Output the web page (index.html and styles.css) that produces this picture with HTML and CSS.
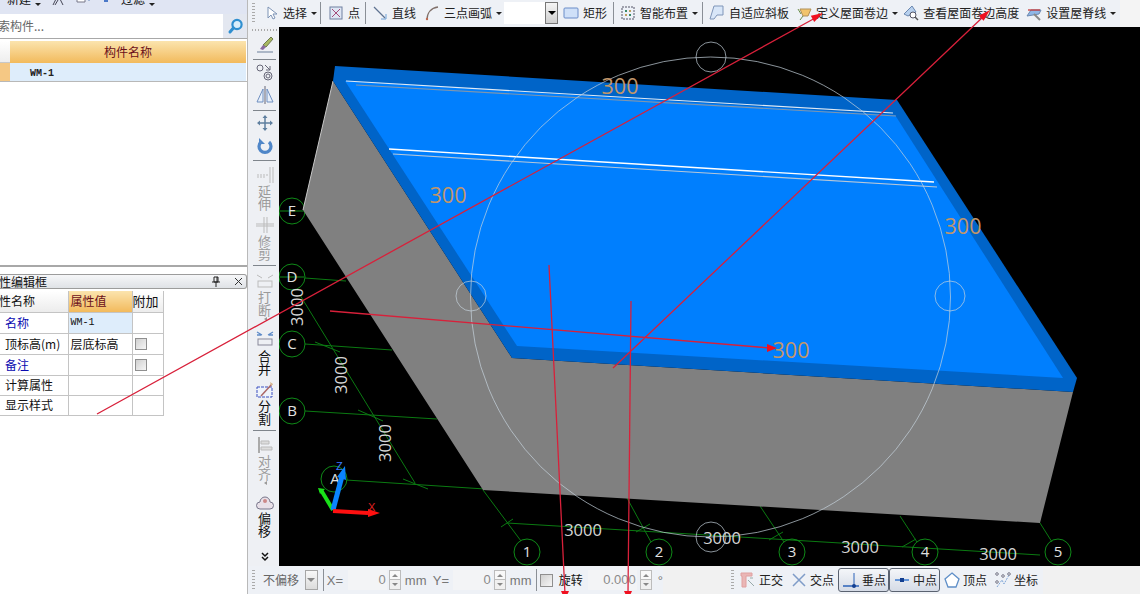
FILE: index.html
```html
<!DOCTYPE html>
<html lang="zh">
<head>
<meta charset="utf-8">
<title>屋面</title>
<link rel="stylesheet" href="styles.css">
</head>
<body>
<div class="app">
  <aside class="left">
    <section class="list-panel">
      <div class="strip">
        <span class="st-a">新建</span><span class="caret"></span>
        <svg class="st-i" width="14" height="14" viewBox="0 0 14 14"><path d="M2 13 7 3l5 10M4 13l3-5" fill="none" stroke="#445"/></svg>
        <svg class="st-i" width="16" height="14" viewBox="0 0 16 14"><path d="M2 1h8v9H2z" fill="#fff" stroke="#778"/><path d="M11 6h3v3" fill="none" stroke="#68b"/></svg>
        <svg class="st-i" width="10" height="14" viewBox="0 0 10 14"><path d="M3 0h4v10H3z" fill="#4a78c8"/></svg>
        <span class="st-b">过滤</span><span class="caret"></span>
      </div>
      <div class="search">
        <div class="search-box">搜索构件...</div>
        <svg class="search-icon" width="18" height="18" viewBox="0 0 18 18"><circle cx="10" cy="7.5" r="4.6" fill="#d9eefb" stroke="#2f8fd0" stroke-width="2.2"/><path d="M6.4 11 3 15" stroke="#2f8fd0" stroke-width="3" stroke-linecap="round"/></svg>
      </div>
      <div class="grid-head"><div class="corner"></div><div class="hcell">构件名称</div></div>
      <div class="grid-row"><div class="rowmark"></div><div class="rowcell">WM-1</div></div>
    </section>
    <section class="prop-panel">
      <div class="titlebar">
        <span class="title">属性编辑框</span>
        <svg class="pin" width="10" height="11" viewBox="0 0 10 11"><path d="M3 1h4v5H3zM1 6h8M5 6v5M6 1v5" fill="none" stroke="#222"/></svg>
        <svg class="close" width="9" height="9" viewBox="0 0 9 9"><path d="M1 1l7 7M8 1 1 8" stroke="#333"/></svg>
      </div>
      <table class="props">
        <tr class="h"><th class="c1"><span class="cut">属性名称</span></th><th class="c2 orange">属性值</th><th class="c3">附加</th></tr>
        <tr class="r1"><td class="lab blue">名称</td><td class="sel">WM-1</td><td></td></tr>
        <tr class="r1"><td class="lab">顶标高(m)</td><td class="val">层底标高</td><td><span class="cb"></span></td></tr>
        <tr class="r1"><td class="lab blue">备注</td><td></td><td><span class="cb"></span></td></tr>
        <tr class="r2"><td class="lab">计算属性</td><td></td><td></td></tr>
        <tr class="r2"><td class="lab">显示样式</td><td></td><td></td></tr>
      </table>
    </section>
  </aside>

  <div class="right">
    <header class="topbar">
      <span class="grip"></span>
      <div class="tool first"><svg width="16" height="16" viewBox="0 0 16 16"><path d="M5 2v11l3-3 2 4 2-1-2-4h4z" fill="#fff" stroke="#7d93b5"/></svg><span>选择</span><i class="caret"></i></div>
      <span class="sep s3"></span>
      <div class="tool ml7"><svg width="16" height="16" viewBox="0 0 16 16"><rect x="2" y="2" width="12" height="12" fill="#dfe6f4" stroke="#6f80a0"/><path d="M4 4l8 8M12 4l-8 8" stroke="#a44c7a"/></svg><span>点</span></div>
      <span class="sep s5"></span>
      <div class="tool"><svg width="16" height="16" viewBox="0 0 16 16"><path d="M2 2l11 11" stroke="#5f7390" stroke-width="1.3"/><path d="M9 14h5V9" fill="none" stroke="#6fa1d6"/></svg><span>直线</span></div>
      <div class="tool ml8"><svg width="16" height="16" viewBox="0 0 16 16"><path d="M3 15C3 8 7 3 14 2" fill="none" stroke="#80706a" stroke-width="1.3"/><circle cx="3" cy="14" r="1.2" fill="#c06a50"/></svg><span>三点画弧</span><i class="caret"></i></div>
      <div class="combo"><div class="combo-field"></div><div class="combo-btn"><i class="caret dark"></i></div></div>
      <div class="tool ml5"><svg width="16" height="16" viewBox="0 0 16 16"><rect x="1" y="3" width="14" height="10" rx="1" fill="#cfe0f8" stroke="#6a8cc8"/></svg><span>矩形</span></div>
      <span class="sep s6"></span>
      <div class="tool"><svg width="16" height="16" viewBox="0 0 16 16"><rect x="2" y="2" width="12" height="12" fill="#eef2f8" stroke="#556" stroke-dasharray="2 1"/><path d="M5 5h2v2H5zM9 9h2v2H9z" fill="#3a8a6a"/><path d="M9 5h2v2H9zM5 9h2v2H5z" fill="#c0a060"/></svg><span>智能布置</span><i class="caret"></i></div>
      <span class="sep s4"></span>
      <div class="tool"><svg width="16" height="16" viewBox="0 0 16 16"><path d="M5 1h9v9H8L5 14H1z" fill="#d8e6f8" stroke="#7f95b8"/></svg><span>自适应斜板</span></div>
      <div class="tool ml7"><svg width="16" height="16" viewBox="0 0 16 16"><path d="M4 4h11l-3 7H7z" fill="#f2c46c" stroke="#b0905a"/><path d="M2 4l3 5M4 15l3-4" stroke="#6b8e4a"/></svg><span>定义屋面卷边</span><i class="caret"></i></div>
      <div class="tool ml5"><svg width="16" height="16" viewBox="0 0 16 16"><path d="M1 9 9 1l4 6-8 4z" fill="#b7d0ee" stroke="#6a88b0"/><circle cx="10" cy="10" r="3" fill="#fff" stroke="#556"/><path d="M12 12l3 3" stroke="#555" stroke-width="1.4"/></svg><span>查看屋面卷边高度</span></div>
      <div class="tool ml7"><svg width="16" height="16" viewBox="0 0 16 16"><path d="M1 11 5 5h10l-2 4z" fill="#8fb6e6" stroke="#6a88b0"/><path d="M2 5h12" stroke="#c83838" stroke-width="1.3"/><path d="M8 9l6 6" stroke="#888" stroke-width="2"/></svg><span>设置屋脊线</span><i class="caret"></i></div>
    </header>

    <div class="middle">
      <nav class="vtool">
        <span class="hgrip"></span>
        <div class="vbtn lead"><svg width="20" height="18" viewBox="0 0 20 18"><path d="M16 1l2 2-7 8-3-2z" fill="#a8b860" stroke="#6f7a50"/><path d="M8 9l3 2-3 3-3-1z" fill="#8a6aa0"/><path d="M2 16h16" stroke="#6a7f9a"/></svg></div>
        <span class="vsep"></span>
        <div class="vbtn"><svg width="20" height="18" viewBox="0 0 20 18"><circle cx="5" cy="5" r="3" fill="none" stroke="#667"/><circle cx="13" cy="13" r="4" fill="none" stroke="#667"/><circle cx="13" cy="13" r="2" fill="none" stroke="#667"/><path d="M10 2l5 5M15 3v4h-4" fill="none" stroke="#667"/></svg></div>
        <div class="vbtn"><svg width="20" height="20" viewBox="0 0 20 20"><path d="M10 1v18" stroke="#667"/><path d="M8 4v13H2z" fill="#e8f0fa" stroke="#6f8fc0"/><path d="M12 4v13h6z" fill="#e8f0fa" stroke="#6f8fc0"/></svg></div>
        <span class="vsep m4"></span>
        <div class="vbtn"><svg width="18" height="18" viewBox="0 0 18 18"><path d="M9 2v14M2 9h14" stroke="#5f7f9f" stroke-width="1.5"/><path d="M9 1l2.5 3h-5zM9 17l2.5-3h-5zM1 9l3-2.5v5zM17 9l-3-2.5v5z" fill="#5f7f9f"/></svg></div>
        <div class="vbtn"><svg width="18" height="18" viewBox="0 0 18 18"><path d="M5 5a6 6 0 1 0 8 0" fill="none" stroke="#4f86c8" stroke-width="3.2"/><path d="M3 1v6h6z" fill="#4f86c8"/></svg></div>
        <span class="vsep m3"></span>
        <div class="vitem p5 off"><svg width="20" height="18" viewBox="0 0 20 18"><path d="M15 1v16M18 1v16" stroke="#bbb"/><path d="M2 9h11M2 11h9" stroke="#bbb" stroke-dasharray="2 1"/></svg><span class="vlabel">延伸</span></div>
        <div class="vitem p6 off"><svg width="20" height="18" viewBox="0 0 20 18"><path d="M9 1v16M12 1v16" stroke="#bbb"/><path d="M1 8h18M1 10h18" stroke="#bbb"/></svg><span class="vlabel">修剪</span></div>
        <span class="vsep m5"></span>
        <div class="vitem p6 off"><svg width="20" height="18" viewBox="0 0 20 18"><path d="M2 3l5 3M18 3l-5 3" stroke="#bbb"/><rect x="3" y="9" width="14" height="6" fill="none" stroke="#bbb"/></svg><span class="vlabel">打断</span></div>
        <i class="tri"></i>
        <div class="vitem p7"><svg class="tall" width="20" height="20" viewBox="0 0 20 20"><path d="M2 3l5 3M18 3l-5 3M2 6h4M18 6h-4" stroke="#5d8ac8" stroke-width="1.3"/><rect x="3" y="10" width="14" height="6" fill="none" stroke="#889"/></svg><span class="vlabel">合并</span></div>
        <div class="vitem p6"><svg width="20" height="18" viewBox="0 0 20 18"><rect x="2" y="6" width="15" height="10" fill="#eef3fb" stroke="#3a4ec0" stroke-dasharray="3 1"/><path d="M6 15 17 3" stroke="#a66" stroke-width="1.5"/><path d="M15 1l3 2-2 2z" fill="#d6b58c"/></svg><span class="vlabel">分割</span></div>
        <span class="vsep m5"></span>
        <div class="vitem p5 off"><svg width="20" height="18" viewBox="0 0 20 18"><path d="M4 1v16" stroke="#aaa" stroke-width="2"/><path d="M6 5h8v3H6zM6 11h11v3H6z" fill="#ddd" stroke="#bbb"/></svg><span class="vlabel">对齐</span></div>
        <i class="tri"></i>
        <div class="vitem p7"><svg width="20" height="18" viewBox="0 0 20 18"><path d="M5 9a5 5 0 0 1 10 0 3.500 3.500 0 0 1 0 7H5a3.500 3.500 0 0 1 0-7z" fill="#e8e0e8" stroke="#77758a"/><circle cx="10" cy="8" r="2" fill="#c88"/></svg><span class="vlabel">偏移</span></div>
        <div class="chev"><svg width="8" height="10" viewBox="0 0 8 10"><path d="M1 1l3 3 3-3M1 5l3 3 3-3" fill="none" stroke="#111" stroke-width="1.5"/></svg></div>
      </nav>

      <main class="canvas">
        <svg class="scene" width="861" height="539" viewBox="279 27 861 539">
          <g class="grid-lines">
            <path d="M305 278 346 281M305 344 392 350M305 411 437 419M346 480 485 489"/>
            <path d="M507 523 1040 555"/>
            <path d="M300 295 415 483"/>
            <path d="M483 490 521 541M627 498 651 542M760 506 784 542M900 516 917 542M1040 523 1052 542"/>
            <path d="M315 342 340 352M358 410 383 421M403 479 428 489M501 527 513 519M636 532 650 524M769 540 783 532M902 547 916 539"/>
          </g>
          <g class="bubbles">
            <circle cx="292" cy="211" r="13"/><circle cx="292" cy="277" r="13"/><circle cx="292" cy="344" r="13"/><circle cx="292" cy="411" r="13"/>
            <circle cx="334" cy="479" r="13"/><circle cx="527" cy="552" r="13"/><circle cx="659" cy="552" r="13"/><circle cx="792" cy="552" r="13"/><circle cx="925" cy="552" r="13"/><circle cx="1058" cy="552" r="13"/>
            <path d="M280 211h24M280 277h24"/>
          </g>
          <polygon class="wall" points="333,81 303,210 483,490 1040,523 1073,392 512,358"/>
          <path class="wall-edge" d="M333 81 303 210"/>
          <polygon class="roof-band" points="335,66 897,100 1077,378 1073,392 512,358 333,81"/>
          <polygon class="roof-top" points="345,81 895,115 1063,378 517,346"/>
          <path class="ridge thin" d="M346 81 893 113"/>
          <path class="ridge" d="M389 149 934 182"/>
          <path class="ridge-soft dim1" d="M356 85 896 116"/>
          <path class="ridge-soft" d="M393 154 937 187"/>
          <circle class="guide" cx="710.500" cy="297" r="240"/>
          <circle class="guide" cx="711" cy="57" r="15"/><circle class="guide" cx="711" cy="537" r="15"/><circle class="guide" cx="471" cy="296" r="15"/><circle class="guide" cx="950" cy="296" r="15"/>
          <g class="t300">
            <text x="620" y="94">300</text><text x="448" y="203">300</text><text x="963" y="234">300</text><text x="791" y="358">300</text>
          </g>
          <g class="t3000">
            <text x="583" y="536">3000</text><text x="722" y="544">3000</text><text x="860" y="553">3000</text><text x="998" y="560">3000</text>
            <text transform="translate(303 307) rotate(-90)">3000</text>
            <text transform="translate(347 375) rotate(-90)">3000</text>
            <text transform="translate(391 443) rotate(-90)">3000</text>
          </g>
          <g class="bubble-text">
            <text x="292" y="216">E</text><text x="292" y="282">D</text><text x="292" y="349">C</text><text x="292" y="416">B</text><text x="335" y="484">A</text>
            <text x="527" y="557">1</text><text x="659" y="557">2</text><text x="792" y="557">3</text><text x="925" y="557">4</text><text x="1058" y="557">5</text>
          </g>
          <path class="ax-g" d="M333 510 321 490"/><polygon class="ax-gf" points="318,488 325,489 320,494"/>
          <path class="ax-b" d="M333 510 342 476"/><polygon class="ax-bf" points="345,466 346,480 337,477"/>
          <path class="ax-r" d="M333 511 368 513"/><polygon class="ax-rf" points="380,513 368,509 368,517"/>
          <text class="ax-z" x="336" y="470">Z</text>
          <text class="ax-x" x="368" y="511">X</text>
        </svg>
      </main>
    </div>

    <footer class="bottombar">
      <div class="bgroup g1">
        <span class="grip"></span>
        <span class="dim off-left">不偏移</span>
        <span class="dd"><i class="caret gray"></i></span>
        <span class="sep s5"></span>
        <span class="lat x1">X=</span>
        <span class="num n1">0</span><span class="spin"></span>
        <span class="lat u">mm</span>
        <span class="lat y1">Y=</span>
        <span class="num n1">0</span><span class="spin"></span>
        <span class="lat u">mm</span>
        <span class="sep s4"></span>
        <span class="cb big"></span>
        <span class="rot">旋转</span>
        <span class="num n2">0.000</span><span class="spin wide"></span>
        <span class="lat deg">°</span>
      </div>
      <div class="bgroup g2">
        <span class="grip"></span>
        <div class="snap"><svg width="18" height="18" viewBox="0 0 18 18"><path d="M2 2h11v3H7v11H3V5H2z" fill="#eab6b6" stroke="#e0a0a0"/><path d="M9 9l6 6M11 7h3" stroke="#9aa"/></svg><span>正交</span></div>
        <div class="snap"><svg width="18" height="18" viewBox="0 0 18 18"><path d="M3 3l12 12M15 3 3 15" stroke="#7f9cc8" stroke-width="1.5"/></svg><span>交点</span></div>
        <div class="snap on"><svg width="18" height="18" viewBox="0 0 18 18"><path d="M1 15h16" stroke="#2b62b8" stroke-width="1.5"/><path d="M12 2v13" stroke="#2b62b8"/><circle cx="12" cy="15" r="2" fill="#123e90"/></svg><span>垂点</span></div>
        <div class="snap on"><svg width="18" height="18" viewBox="0 0 18 18"><path d="M2 9h14" stroke="#3b7ad0" stroke-width="1.5"/><rect x="7" y="7" width="4" height="4" fill="#123e90"/></svg><span>中点</span></div>
        <div class="snap after-on"><svg width="18" height="18" viewBox="0 0 18 18"><path d="M9 2l7 6-3 8H5L2 8z" fill="#fff" stroke="#5f8fc8" stroke-width="1.3"/></svg><span>顶点</span></div>
        <div class="snap"><svg width="18" height="18" viewBox="0 0 18 18"><path d="M3 16 8 9l2 4 5-9" fill="none" stroke="#7fa6d8" stroke-dasharray="2 1"/><circle cx="3" cy="3" r="1.300" fill="none" stroke="#778"/><circle cx="15" cy="3" r="1.300" fill="none" stroke="#778"/><circle cx="9" cy="5" r="1.300" fill="none" stroke="#778"/><circle cx="3" cy="11" r="1.300" fill="none" stroke="#778"/></svg><span>坐标</span></div>
      </div>
    </footer>
  </div>
</div>

<svg class="annot" width="1140" height="594" viewBox="0 0 1140 594">
  <path d="M97 414 817 17M613 368 984 16M330 311 770 348M549 265 565 594M631 301 628 594"/>
  <polygon points="823,13 814.200,21.900 810.800,15.700"/>
  <polygon points="990,10 983.600,20.800 978.800,15.800"/>
  <polygon points="777,348 767,344 767,352"/>
  <polygon points="561,591 569,591 565,600"/>
  <polygon points="624,591 632,591 628,600"/>
</svg>
</body>
</html>
```

FILE: styles.css
```css
* { box-sizing: border-box; }
html, body { margin: 0; padding: 0; height: 100%; }
body {
  position: relative;
  width: 1140px;
  height: 594px;
  overflow: hidden;
  background: #fff;
  font: 12px/14px "Noto Sans CJK SC", "Liberation Sans", sans-serif;
  color: #111;
}
.app { display: flex; width: 1140px; height: 594px; }

/* left column */
.left {
  width: 248px;
  flex: none;
  display: flex;
  flex-direction: column;
  background: #fff;
  border-right: 1px solid #b9b9b9;
}
.list-panel {
  height: 267px;
  flex: none;
  border-bottom: 2px solid #a8a8a8;
  overflow: hidden;
}
.strip {
  height: 14px;
  display: flex;
  align-items: flex-end;
  gap: 4px;
  padding: 0 0 8px 7px;
  background: #e0e5f3;
  overflow: hidden;
  white-space: nowrap;
}
.st-i { flex: none; margin-left: 6px; }
.st-b { margin-left: 6px; }
.caret {
  display: inline-block;
  width: 0;
  height: 0;
  border: 3px solid transparent;
  border-top: 3px solid #222;
  border-bottom: 0;
  flex: none;
}
.caret.dark { border-top-color: #000; border-width: 4px 4px 0; }
.caret.gray { border-top-color: #888; border-width: 4px 4px 0; }
.search {
  height: 25px;
  display: flex;
  align-items: center;
  background: #e3e7f0;
  border-bottom: 1px solid #a8a8a8;
}
.search-box {
  width: 223px;
  height: 24px;
  background: #fff;
  color: #666;
  font-size: 12px;
  line-height: 23px;
  text-indent: -14px;
  overflow: hidden;
  white-space: nowrap;
}
.search-icon { margin-left: 4px; }
.grid-head { display: flex; height: 22px; margin-top: 2px; }
.corner { width: 10px; background: linear-gradient(#fff, #eee); border-bottom: 1px solid #c8c8c8; }
.hcell {
  width: 236px;
  text-align: center;
  color: #6b0f1a;
  font-size: 12px;
  line-height: 21px;
  background: linear-gradient(#fbe4ae, #f2ba5c);
}
.grid-row { display: flex; height: 19px; border-bottom: 1px solid #b8b8b8; }
.rowmark { width: 10px; background: #f5c884; }
.rowcell {
  width: 236px;
  padding-left: 20px;
  background: #deedfb;
  font: 700 10px/21px "Liberation Mono", monospace;
  color: #222;
}
.prop-panel { flex: 1; padding-top: 7px; }
.titlebar {
  height: 15px;
  display: flex;
  align-items: center;
  background: linear-gradient(#f6f7f9, #dfe2e6);
  border: 1px solid #9c9c9c;
  border-left: 0;
  border-radius: 0 3px 3px 0;
  overflow: hidden;
}
.title { flex: 1; font-size: 12px; text-indent: -13px; white-space: nowrap; overflow: hidden; }
.pin { margin-right: 13px; }
.close { margin-right: 3px; }
.props {
  border-collapse: collapse;
  margin-top: 2px;
  table-layout: fixed;
  width: 163px;
  font-size: 12px;
}
.props th, .props td { border: 1px solid #c4c4c4; padding: 0; font-weight: 400; overflow: hidden; white-space: nowrap; }
.props tr > :first-child { border-left: 0; }
.props tr.h > * { border-top: 0; }
.c1 { width: 68px; background: linear-gradient(#fff, #ececec); text-align: left; }
.c2 { width: 64px; }
.c3 { width: 31px; background: linear-gradient(#fff, #ececec); font-size: 13px; text-align: left; }
.cut { display: block; margin-left: -13px; font-size: 12px; }
.orange { background: linear-gradient(#fbe4ae, #f2ba5c); color: #6b0f1a; font-size: 12px; text-align: left; padding-left: 2px !important; }
tr.h { height: 21px; }
tr.r1 { height: 21px; }
tr.r2 { height: 20px; }
.lab { padding-left: 5px !important; }
.blue { color: #0a0ab0; }
.sel { background: #deedfb; font: 700 10px "Liberation Mono", monospace; padding-left: 2px !important; }
.val { padding-left: 2px !important; }
.cb {
  display: block;
  width: 12px;
  height: 12px;
  margin-left: 2px;
  background: linear-gradient(135deg, #d0d0d0, #f6f6f6);
  border: 1px solid #8f8f8f;
}

/* right column */
.right { flex: 1; min-width: 0; display: flex; flex-direction: column; }
.topbar {
  height: 27px;
  flex: none;
  display: flex;
  align-items: center;
  padding: 0 0 1px 4px;
  background: linear-gradient(90deg, #eef1f6 0, #eef1f6 872px, #f4f4f4 872px);
  white-space: nowrap;
}
.grip {
  width: 3px;
  height: 20px;
  flex: none;
  background: repeating-linear-gradient(#aaa 0 1px, transparent 1px 3px);
}
.tool { display: flex; align-items: center; gap: 4px; margin-left: 6px; flex: none; color: #222; }
.tool svg { flex: none; }
.tool.first { margin-left: 8px; }
.tool.ml5 { margin-left: 5px; }
.tool.ml7 { margin-left: 7px; }
.tool.ml8 { margin-left: 8px; }
.sep { width: 1px; height: 22px; flex: none; background: #8a8f96; }
.s3 { margin-left: 3px; }
.s4 { margin-left: 4px; }
.s5 { margin-left: 5px; }
.s6 { margin-left: 6px; }
.combo { display: flex; height: 22px; margin-left: 2px; flex: none; }
.combo-field { width: 41px; background: #fff; }
.combo-btn {
  width: 13px;
  display: flex;
  align-items: center;
  justify-content: center;
  background: linear-gradient(#f5f5f5, #cfcfcf);
  border: 1px solid #777;
}
.middle { flex: 1; min-height: 0; display: flex; }
.vtool {
  width: 31px;
  flex: none;
  display: flex;
  flex-direction: column;
  align-items: center;
  background: #eef0f4;
  padding-left: 2px;
}
.hgrip {
  width: 26px;
  height: 2px;
  margin: 2px 0 1px;
  flex: none;
  background: repeating-linear-gradient(90deg, #aaa 0 1px, transparent 1px 3px);
}
.vbtn { height: 23px; display: flex; align-items: center; justify-content: center; flex: none; }
.vbtn.lead { padding-top: 2px; }
.vsep { width: 23px; height: 1px; background: #7f858c; flex: none; margin-top: 4px; }
.vsep.m3 { margin-top: 3px; }
.vsep.m5 { margin-top: 5px; }
.vitem { display: flex; flex-direction: column; align-items: center; flex: none; }
.p5 { padding-top: 5px; }
.p6 { padding-top: 6px; }
.p7 { padding-top: 7px; }
.vlabel { width: 13px; font-size: 13px; line-height: 13px; text-align: center; color: #111; }
.off .vlabel { color: #9a9a9a; }
.tri {
  width: 0;
  height: 0;
  margin: 1px 0;
  border: 2px solid transparent;
  border-right: 3px solid #999;
  flex: none;
}
.chev { margin-top: auto; height: 14px; margin-bottom: 2px; display: flex; align-items: center; }
.canvas { flex: 1; min-width: 0; background: #000; overflow: hidden; }
.scene { display: block; }

.grid-lines path { fill: none; stroke: #0b7a12; stroke-width: 1; }
.bubbles circle { fill: none; stroke: #0f8a18; stroke-width: 1; }
.bubbles path { stroke: #0f8a18; }
.wall { fill: #808080; }
.wall-edge { stroke: #c8c8c8; fill: none; }
.roof-band { fill: #0064c8; }
.roof-top { fill: #007ffe; }
.ridge { stroke: #fff; stroke-width: 1.4; fill: none; }
.ridge.thin { stroke: #dfeaf5; stroke-width: 1.1; }
.ridge-soft { stroke: #b8c8d8; stroke-width: 1.1; fill: none; }
.ridge-soft.dim1 { stroke: #7f96ad; }
.guide { fill: none; stroke: #c6d2dc; stroke-width: 0.7; }
.t300 text { font: 21.500px "Open Sans", sans-serif; fill: #c2966a; text-anchor: middle; }
.t3000 text { font: 16.500px "Open Sans", sans-serif; fill: #d6d6d6; text-anchor: middle; }
.bubble-text text { font: 15px "Open Sans", sans-serif; fill: #e0e0e0; text-anchor: middle; }
.ax-g { stroke: #19e019; stroke-width: 4; }
.ax-gf { fill: #19e019; }
.ax-b { stroke: #0a84ff; stroke-width: 5; }
.ax-bf { fill: #0a84ff; }
.ax-r { stroke: #ff1010; stroke-width: 4; }
.ax-rf { fill: #ff1010; }
.ax-z { font: 11px "Liberation Sans", sans-serif; fill: #3b7bff; }
.ax-x { font: 11px "Liberation Sans", sans-serif; fill: #e02020; }

/* bottom bar */
.bottombar {
  height: 28px;
  flex: none;
  display: flex;
  background: #f1f1f1;
  white-space: nowrap;
}
.bgroup { display: flex; align-items: center; height: 28px; background: #eef1f6; flex: none; }
.g1 { width: 415px; padding-left: 4px; }
.g2 { width: 313px; margin-left: 67px; padding-left: 1px; }
.dim { color: #666; }
.off-left { margin-left: 8px; width: 37px; }
.dd {
  width: 13px;
  height: 20px;
  margin-left: 5px;
  flex: none;
  display: flex;
  align-items: center;
  justify-content: center;
  border: 1px solid #a6a6a6;
  background: linear-gradient(#f8f8f8, #dcdcdc);
}
.lat { font: 13px "Liberation Sans", sans-serif; color: #777; flex: none; }
.x1 { margin-left: 3px; width: 21px; }
.y1 { margin-left: 6px; width: 20px; }
.u { margin-left: 4px; width: 22px; }
.deg { margin-left: 6px; }
.num {
  flex: none;
  text-align: right;
  padding-right: 1px;
  height: 20px;
  color: #8a8a8a;
  background: #f3f4f6;
  font: 13px/20px "Liberation Sans", sans-serif;
}
.n1 { width: 39px; }
.n2 { width: 49px; margin-left: 5px; }
.spin {
  width: 12px;
  height: 20px;
  margin-left: 2px;
  flex: none;
  display: flex;
  flex-direction: column;
  align-items: center;
  justify-content: space-around;
  border: 1px solid #bcbcbc;
  background: linear-gradient(#f8f8f8 0 8px, #bcbcbc 8px 9px, #f0f0f0 9px);
}
.spin.wide { margin-left: 3px; }
.spin::before, .spin::after {
  content: "";
  width: 0;
  height: 0;
  border: 3px solid transparent;
}
.spin::before { border-top: 0; border-bottom-color: #888; }
.spin::after { border-bottom: 0; border-top-color: #888; }
.cb.big { width: 13px; height: 13px; margin-left: 3px; flex: none; }
.rot { margin-left: 6px; width: 24px; flex: none; font-size: 12px; }
.snap {
  display: flex;
  align-items: center;
  gap: 2px;
  height: 24px;
  padding: 0 2px;
  flex: none;
  color: #222;
  margin-left: 3px;
}
.snap.on {
  width: 51px;
  margin-left: 2px;
  justify-content: flex-end;
  background: linear-gradient(#f4f6f9, #d5dbe6);
  border: 1px solid #5a6270;
  border-radius: 3px;
}
.snap.on + .snap.on { margin-left: 0; }
.snap.after-on { margin-left: 1px; }
.annot { position: absolute; left: 0; top: 0; pointer-events: none; }
.annot path { fill: none; stroke: #d8203a; stroke-width: 1.300; }
.annot polygon { fill: #f01020; }
```
